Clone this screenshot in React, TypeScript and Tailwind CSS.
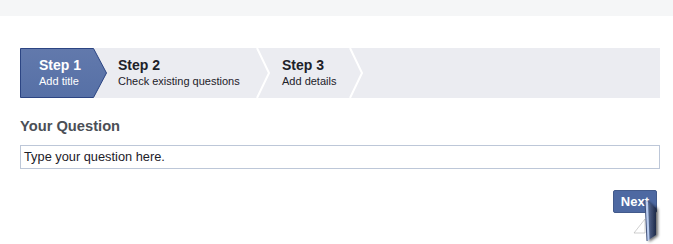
import React from 'react';

const font = { fontFamily: '"Liberation Sans", Arial, Helvetica, sans-serif' };

const Chevron: React.FC = () => (
  <svg width="14" height="50" viewBox="0 0 14 50" className="shrink-0 block">
    <polyline points="1,0 13,25 1,50" fill="none" stroke="#ffffff" strokeWidth="2" />
  </svg>
);

const App: React.FC = () => {
  return (
    <div className="w-[673px] h-[244px] bg-white overflow-hidden" style={font}>
      {/* top strip */}
      <div className="h-4 bg-[#f5f6f7]" />

      <div className="pl-5 pr-[13px] pt-8">
        {/* Steps */}
        <div className="flex h-[50px] bg-[#ebecf1]">
          <div className="relative w-[87px] h-[50px] shrink-0">
            <svg width="88" height="50" viewBox="0 0 88 50" className="absolute inset-0">
              <defs>
                <linearGradient id="act" x1="0" y1="0" x2="0" y2="1">
                  <stop offset="0" stopColor="#6279ac" />
                  <stop offset="1" stopColor="#5670a6" />
                </linearGradient>
              </defs>
              <polygon
                points="0.5,0.5 73.5,0.5 86.5,25 73.5,49.5 0.5,49.5"
                fill="url(#act)"
                stroke="#2c4583"
                strokeWidth="1"
              />
            </svg>
            <div className="relative pl-[19px] pt-[9px] text-white">
              <div className="text-[14px] font-bold leading-[17px]">Step 1</div>
              <div className="text-[11px] leading-[14px]">Add title</div>
            </div>
          </div>

          <div className="w-[149px] shrink-0 pl-[11px] pt-[9px] text-[#1d2129]">
            <div className="text-[14px] font-bold leading-[17px]">Step 2</div>
            <div className="text-[11px] leading-[14px] whitespace-nowrap">Check existing questions</div>
          </div>
          <Chevron />
          <div className="w-[79px] shrink-0 pl-3 pt-[9px] text-[#1d2129]">
            <div className="text-[14px] font-bold leading-[17px]">Step 3</div>
            <div className="text-[11px] leading-[14px] whitespace-nowrap">Add details</div>
          </div>
          <Chevron />
          <div className="flex-1" />
        </div>

        {/* Question */}
        <div className="mt-[20px] text-[14.7px] font-bold leading-[17px] text-[#4b4f56]">Your Question</div>
        <div className="mt-[10px] h-[24px] border border-[#bdc7d8] px-[3px] flex items-center text-[12.8px] text-[#1d2129]">
          Type your question here.
        </div>

        <div className="flex justify-end mt-[20px] pr-[3px]">
          <div className="relative">
            <button className="h-[23px] px-[7px] bg-[#4e69a2] border border-[#435a8b] rounded-[2px] text-white text-[13px] font-bold leading-none">
              Next
            </button>
            <svg
              width="40"
              height="52"
              viewBox="0 0 40 52"
              className="absolute left-[18px] top-[6px] overflow-visible"
            >
              <defs>
                <linearGradient id="door" x1="0" y1="0" x2="1" y2="0">
                  <stop offset="0" stopColor="#6f82ad" />
                  <stop offset="1" stopColor="#1d2a48" />
                </linearGradient>
                <filter id="sh" x="-50%" y="-20%" width="200%" height="150%">
                  <feDropShadow dx="2" dy="1" stdDeviation="1.5" floodColor="#000" floodOpacity="0.6" />
                </filter>
              </defs>
              <polygon points="3,38 14,24 14,38" fill="#ffffff" stroke="#b0b0b0" strokeWidth="0.6" />
              <polygon points="14,5 25,13 25,40 16,46" fill="url(#door)" filter="url(#sh)" />
              <polygon points="14,5 17,7 18.5,44.5 16,46" fill="#b8cbef" />
              <polyline points="14,5 16,46" stroke="#2b3b63" strokeWidth="0.8" fill="none" />
            </svg>
          </div>
        </div>
      </div>
    </div>
  );
};

export default App;
